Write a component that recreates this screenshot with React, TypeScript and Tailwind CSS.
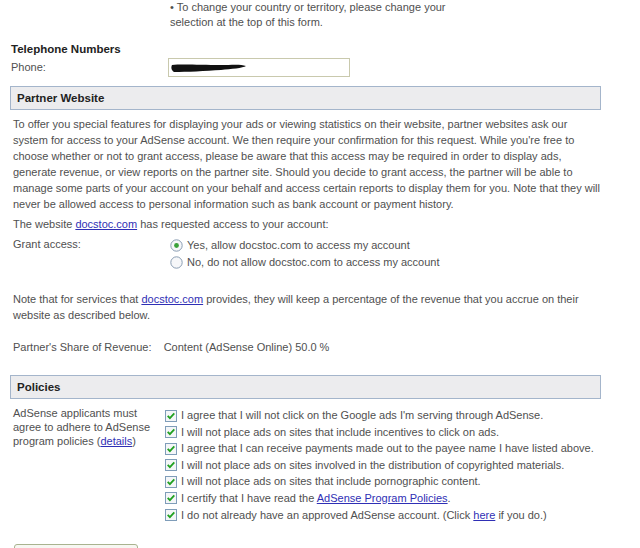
import { ReactNode } from "react";

const Link = ({ children }: { children: ReactNode }) => (
  <span className="text-[#2f2fb5] underline">{children}</span>
);

const Checkbox = () => (
  <svg width="12" height="12" viewBox="0 0 12 12" className="shrink-0">
    <rect x="0.5" y="0.5" width="11" height="11" fill="#f4f6f8" stroke="#7f9db9" />
    <path d="M2.7 5.8 L4.9 8.1 L9.3 3.3" fill="none" stroke="#21a121" strokeWidth="1.8" />
  </svg>
);

const Radio = ({ checked }: { checked?: boolean }) => (
  <svg width="13" height="13" viewBox="0 0 13 13" className="shrink-0">
    <circle cx="6.5" cy="6.5" r="5.7" fill="#f6f7f9" stroke="#8a9db3" />
    {checked && <circle cx="6.5" cy="6.5" r="2.4" fill="#3aa13a" />}
  </svg>
);

const SectionBar = ({ title }: { title: string }) => (
  <div className="mx-[10px] w-[591px] h-[24px] flex items-center px-[6px] bg-[#ececee] border border-[#a4b5cb] font-bold text-[11.5px] text-[#222]">
    {title}
  </div>
);

const policies: ReactNode[] = [
  "I agree that I will not click on the Google ads I'm serving through AdSense.",
  "I will not place ads on sites that include incentives to click on ads.",
  "I agree that I can receive payments made out to the payee name I have listed above.",
  "I will not place ads on sites involved in the distribution of copyrighted materials.",
  "I will not place ads on sites that include pornographic content.",
  <>I certify that I have read the <Link>AdSense Program Policies</Link>.</>,
  <>I do not already have an approved AdSense account. (Click <Link>here</Link> if you do.)</>,
];

export default function App() {
  return (
    <div className="w-[640px] h-[548px] overflow-hidden bg-white text-[#505050] text-[11px] leading-[15px]" style={{ fontFamily: '"Liberation Sans", Arial, sans-serif' }}>
      {/* country note */}
      <div className="pl-[170px] pt-0">
        <p>• To change your country or territory, please change your</p>
        <p>selection at the top of this form.</p>
      </div>

      {/* telephone */}
      <div className="pl-[11px] mt-[12px]">
        <p className="font-bold text-[11.5px] text-[#222]">Telephone Numbers</p>
        <div className="flex items-center mt-[1px]">
          <span className="w-[157px]">Phone:</span>
          <div className="w-[182px] h-[19px] border border-[#c9c9ad] bg-white flex items-center pl-[2px]">
            <svg width="76" height="10" viewBox="0 0 76 10">
              <path d="M1 2 C10 1 30 2 50 2 C60 2 70 1 75 3 C72 5 60 6 50 7 C35 8 15 9 3 9 C0 7 0 4 1 2 Z" fill="#111" />
            </svg>
          </div>
        </div>
      </div>

      {/* partner website */}
      <div className="mt-[9px]">
        <SectionBar title="Partner Website" />
        <div className="px-[13px] mt-[6px] leading-[16px]">
          <p className="w-[590px]">
            To offer you special features for displaying your ads or viewing statistics on their website, partner websites ask our system for access to your AdSense account. We then require your confirmation for this request. While you're free to choose whether or not to grant access, please be aware that this access may be required in order to display ads, generate revenue, or view reports on the partner site. Should you decide to grant access, the partner will be able to manage some parts of your account on your behalf and access certain reports to display them for you. Note that they will never be allowed access to personal information such as bank account or payment history.
          </p>
          <p className="mt-[4px]">
            The website <Link>docstoc.com</Link> has requested access to your account:
          </p>

          <div className="flex mt-[4px] leading-[15px]">
            <span className="w-[157px] pt-[1px]">Grant access:</span>
            <div className="flex flex-col gap-[2px] pt-[2px]">
              <label className="flex items-center gap-[4px]">
                <Radio checked />
                <span>Yes, allow docstoc.com to access my account</span>
              </label>
              <label className="flex items-center gap-[4px]">
                <Radio />
                <span>No, do not allow docstoc.com to access my account</span>
              </label>
            </div>
          </div>

          <p className="mt-[21px] w-[575px]">
            Note that for services that <Link>docstoc.com</Link> provides, they will keep a percentage of the revenue that you accrue on their website as described below.
          </p>

          <p className="mt-[16px]">
            Partner's Share of Revenue:&nbsp;&nbsp;&nbsp;&nbsp;Content (AdSense Online) 50.0 %
          </p>
        </div>
      </div>

      {/* policies */}
      <div className="mt-[20px]">
        <SectionBar title="Policies" />
        <div className="flex px-[13px] mt-[6px]">
          <p className="w-[152px] leading-[14px] pt-[1px]">
            AdSense applicants must agree to adhere to AdSense program policies (<Link>details</Link>)
          </p>
          <div className="flex flex-col gap-[1.6px] pt-[3px]">
            {policies.map((text, i) => (
              <label key={i} className="flex items-center gap-[4px]">
                <Checkbox />
                <span>{text}</span>
              </label>
            ))}
          </div>
        </div>
        <div className="ml-[14px] mt-[21px] w-[124px] h-[20px] border border-[#a9b38f] rounded-[3px] bg-[#f7f7f2]" />
      </div>
    </div>
  );
}
